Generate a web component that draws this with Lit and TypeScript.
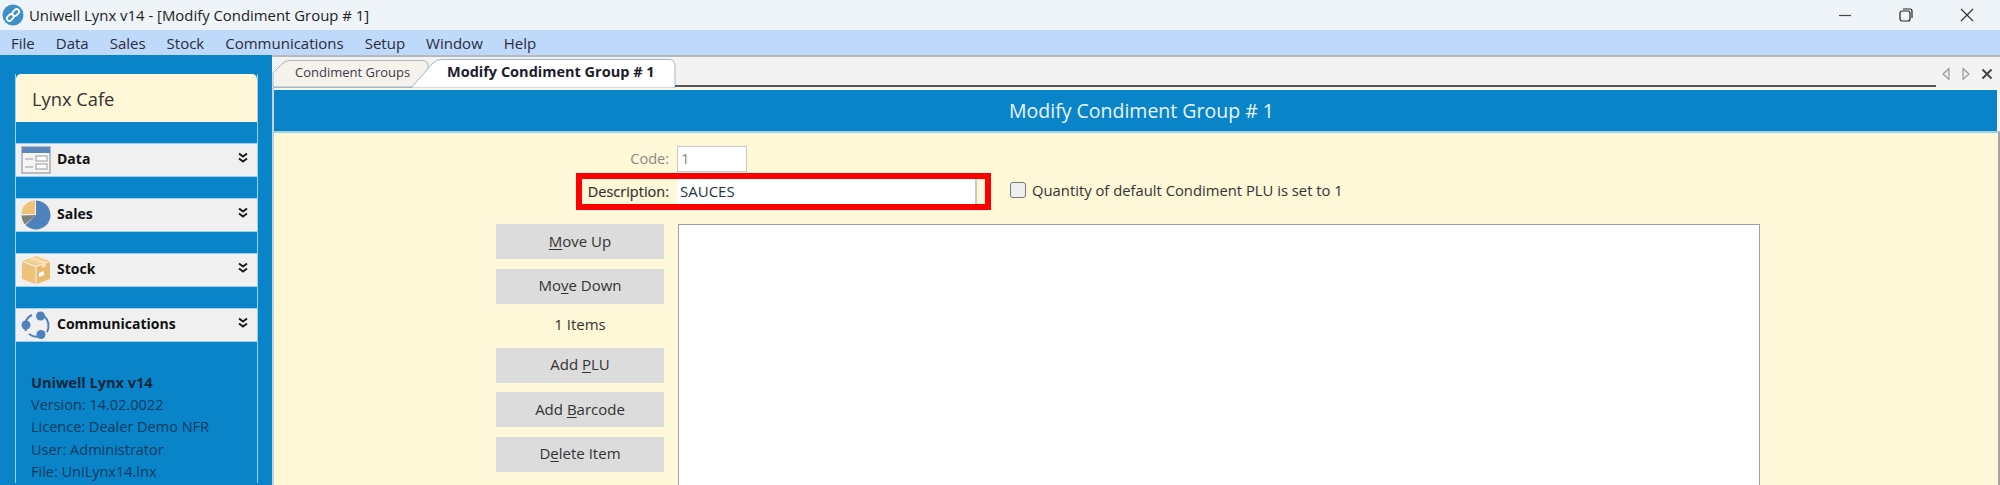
import { LitElement, html, css, svg } from "lit";
import { customElement } from "lit/decorators.js";

const chev = html`<svg class="chev" viewBox="0 0 12 12" width="12" height="12"><path d="M2 1.500 6 4.500 10 1.500M2 6.500 6 9.500 10 6.500" fill="none" stroke="#1a1a1a" stroke-width="2"/></svg>`;

const icons: Record<string, unknown> = {
  data: svg`<rect x="1" y="2" width="28" height="26" fill="#f4f4f4" stroke="#a9a9a9" stroke-width="1.500"/><rect x="1" y="2" width="28" height="6" fill="#5b87bd"/><path d="M4 14h8M4 22h8" stroke="#999" stroke-width="1.200"/><rect x="15" y="11" width="11" height="5" fill="#fff" stroke="#999"/><rect x="15" y="19" width="11" height="5" fill="#fff" stroke="#999"/>`,
  sales: svg`<path d="M15 15 15 0.500A14.500 14.500 0 1 1 4.500 25Z" fill="#4f81bd"/><path d="M15 15 4 24.500A14.500 14.500 0 0 1 0.600 15.500Z" fill="#7f7f7f"/><path d="M14 14 14 .5A13.500 13.500 0 0 0 .5 14Z" fill="#eec377"/>`,
  stock: svg`<path d="M15 1 29 6 15 11 1 6Z" fill="#f3cf92"/><path d="M1 7 14.500 12V29L1 24Z" fill="#eec27b"/><path d="M15.500 12 29 7V24L15.500 29Z" fill="#e9b96f"/><path d="M7 3.500 21 8.500V13L25 11.500V7L11 2Z" fill="#f8e0b4"/><path d="M18 18 23 16V20L18 22Z" fill="#fff"/>`,
  comm: svg`<path d="M5 21A12 12 0 0 1 11 5M23 6A13 13 0 0 1 26 22M20 26A13 13 0 0 1 8 24" fill="none" stroke="#4f81bd" stroke-width="2"/><circle cx="19.500" cy="6" r="4.500" fill="#4f81bd"/><circle cx="5" cy="15" r="4.500" fill="#4f81bd"/><circle cx="20" cy="24.500" r="4.500" fill="#4f81bd"/>`,
};

@customElement("app-root")
export class AppRoot extends LitElement {
  static styles = css`
    :host { display: block; width: 2000px; height: 485px; overflow: hidden; font-family: "Open Sans", "Noto Sans", sans-serif; color: #222; background: #0a84c8; }
    .title { height: 30px; background: #eff4f9; display: flex; align-items: center; font-size: 14.900px; color: #222; padding-right: 3px; }
    .logo { margin: 0 5px 0 2px; flex: none; }
    .title .t { flex: 1; }
    .win { width: 61px; height: 30px; display: flex; align-items: center; justify-content: center; flex: none; }
    .menu { height: 25px; background: #bfd9fb; display: flex; align-items: center; font-size: 15px; color: #2b2b3a; padding-left: 11px; gap: 21px; }
    .body { display: flex; height: 430px; }
    .side { width: 272px; flex: none; padding: 19px 15px 0; box-sizing: border-box; }
    .panel { width: 243px; border-left: 1.500px solid #9fd0ea; border-right: 1.500px solid #9fd0ea; box-sizing: border-box; }
    .cafe { height: 48px; background: #fef7d8; border-radius: 5px 5px 0 0; display: flex; align-items: center; padding-left: 16px; font-size: 18.300px; color: #333; box-sizing: border-box; padding-top: 1px; }
    .sec { height: 34px; background: #f0f0f0; margin-top: 21px; display: flex; align-items: center; font-weight: 700; font-size: 14px; color: #111; padding: 0 8px 3px 5px; border-top: 1px solid #9fd0ea; border-bottom: 1px solid #9fd0ea; box-sizing: border-box; }
    .sec svg.ic { margin-right: 6px; flex: none; margin-bottom: -2px; }
    .sec span { flex: 1; }
    .chev { margin-bottom: 2px; }
    .info { margin-top: 30px; padding-left: 15px; font-size: 14.500px; line-height: 22.200px; color: #0a3a5c; white-space: nowrap; }
    .info b { color: #04263f; }
    .main { flex: 1; display: flex; flex-direction: column; padding-left: 2px; background: #f7f7f7; position: relative; }
    .main::before { content: ""; position: absolute; left: 0; top: 33px; bottom: 0; width: 2px; background: #c4d2dc; }
    .tabs { height: 33px; background: #f3f3f3; border-top: 2px solid #b9b9b9; box-sizing: border-box; margin-left: -2px; position: relative; flex: none; }
    .tabshape { position: absolute; left: 0; bottom: 0; display: block; }
    .tab { position: absolute; white-space: nowrap; line-height: 20px; }
    .t1 { left: 23px; top: 5px; font-size: 13px; color: #3a3a4a; }
    .t2 { left: 175px; top: 5px; font-size: 14.500px; font-weight: 700; color: #1c1c2c; }
    .tabline { position: absolute; left: 403px; right: 64px; bottom: 1px; height: 2px; background: #555; }
    .tools { position: absolute; right: 7px; top: 10px; display: flex; gap: 10px; align-items: center; }
    .bluehead { height: 41px; background: #0a84c8; color: #eaf4fb; font-size: 19.500px; display: flex; align-items: center; justify-content: center; flex: none; margin-top: 2px; margin-right: 3px; padding-left: 12px; box-sizing: border-box; }
    .form { flex: 1; background: #fef7d8; border-top: 2px solid #9fd0ea; border-right: 2px solid #a6a6a6; display: flex; flex-direction: column; min-height: 0; }
    .row { display: flex; align-items: center; }
    .lab { width: 250px; margin-left: 153px; text-align: right; font-size: 14.500px; padding-right: 8px; box-sizing: border-box; flex: none; }
    .code { margin-top: 13px; height: 26px; }
    .code .lab { color: #8a8a8a; padding-bottom: 2px; }
    .codebox { width: 70px; height: 26px; border: 1.500px solid #c8c8c8; background: #fff; box-sizing: border-box; color: #888; font-size: 15px; padding-left: 3px; line-height: 22px; }
    .desc { margin-top: 7px; height: 25px; position: relative; }
    .desc .lab { color: #333; -webkit-text-stroke: 0.200px #333; }
    .input { width: 300px; height: 25px; background: #fff; border-right: 2px solid #c8c8c8; box-sizing: border-box; font-size: 15px; color: #234; padding-left: 3px; line-height: 24px; }
    .redbox { position: absolute; left: 302px; top: -6px; width: 415px; height: 37px; border: 6px solid #ff0000; box-sizing: border-box; pointer-events: none; }
    .cb { margin-left: 33px; margin-bottom: 4px; display: flex; align-items: center; font-size: 14.800px; color: #333; white-space: nowrap; }
    .box { width: 16px; height: 16px; border: 1.500px solid #777; border-radius: 3px; background: #eee; box-sizing: border-box; margin-right: 6px; }
    .lower { display: flex; margin-top: 20px; flex: 1; min-height: 0; }
    .btns { width: 168px; margin-left: 222px; display: flex; flex-direction: column; flex: none; }
    .btn { height: 35px; background: #dcdcdc; display: flex; align-items: center; justify-content: center; font-size: 15px; color: #333; flex: none; padding-bottom: 2px; box-sizing: border-box; }
    .btn + .btn { margin-top: 9.500px; }
    .items { height: 44px; display: flex; align-items: center; justify-content: center; font-size: 15px; color: #333; flex: none; padding-bottom: 3px; box-sizing: border-box; }
    .list { width: 1082px; margin-left: 14px; background: #fff; border: 1.500px solid #a0a0a0; border-bottom: none; box-sizing: border-box; }
    u { text-underline-offset: 2px; }
  `;

  render() {
    const sec = (n: string, k: string) => html`<div class="sec"><svg class="ic" viewBox="0 0 30 30" width="30" height="30">${icons[k]}</svg><span>${n}</span>${chev}</div>`;
    return html`
      <div class="title">
        <svg class="logo" viewBox="0 0 22 22" width="22" height="22"><circle cx="11" cy="11" r="10.500" fill="#3f8fc9"/><g fill="none" stroke="#fff" stroke-width="1.800"><rect x="4.500" y="11" width="7.500" height="5" rx="2.500" transform="rotate(-45 8.250 13.500)"/><rect x="10" y="6" width="7.500" height="5" rx="2.500" transform="rotate(-45 13.750 8.500)"/></g></svg>
        <div class="t">Uniwell Lynx v14 - [Modify Condiment Group # 1]</div>
        <div class="win"><svg width="14" height="14" viewBox="0 0 14 14"><path d="M1 7.500H13" stroke="#444" stroke-width="1.200"/></svg></div>
        <div class="win"><svg width="14" height="14" viewBox="0 0 14 14"><rect x="1" y="3" width="10" height="10" rx="2" fill="none" stroke="#222" stroke-width="1.200"/><path d="M4 1h7a2 2 0 0 1 2 2v7" fill="none" stroke="#222" stroke-width="1.200"/></svg></div>
        <div class="win"><svg width="14" height="14" viewBox="0 0 14 14"><path d="M1 1 13 13M13 1 1 13" stroke="#333" stroke-width="1.200"/></svg></div>
      </div>
      <div class="menu">${["File","Data","Sales","Stock","Communications","Setup","Window","Help"].map(m => html`<span>${m}</span>`)}</div>
      <div class="body">
        <div class="side"><div class="panel">
          <div class="cafe">Lynx Cafe</div>
          ${sec("Data","data")}${sec("Sales","sales")}${sec("Stock","stock")}${sec("Communications","comm")}
          <div class="info"><b>Uniwell Lynx v14</b><br>Version: 14.02.0022<br>Licence: Dealer Demo NFR<br>User: Administrator<br>File: UniLynx14.lnx</div>
        </div></div>
        <div class="main">
          <div class="tabs">
            <svg class="tabshape" width="410" height="31" viewBox="0 0 410 31">
              <path d="M1 16 L11 6 Q14 3.500 18 3.500 H150 Q156 3.500 156 8 V30 H1Z" fill="#f5f3ec" stroke="#b5b5b5"/>
              <path d="M139 31 L161 6 Q164 2.500 170 2.500 H397 Q403 2.500 403 8 V31Z" fill="#fff" stroke="#9db8cf"/>
              <path d="M1 30.500H139" stroke="#9db8cf"/>
            </svg>
            <div class="tab t1">Condiment Groups</div>
            <div class="tab t2">Modify Condiment Group # 1</div>
            <div class="tabline"></div>
            <div class="tools">
              <svg width="10" height="14" viewBox="0 0 10 14"><path d="M8 1.500 2 7l6 5.500Z" fill="#eee" stroke="#999" stroke-width="1.200"/></svg>
              <svg width="10" height="14" viewBox="0 0 10 14"><path d="M2 1.500 8 7l-6 5.500Z" fill="#eee" stroke="#999" stroke-width="1.200"/></svg>
              <svg width="12" height="12" viewBox="0 0 12 12"><path d="M1.500 1.500 10.500 10.500M10.500 1.500 1.500 10.500" stroke="#444" stroke-width="2"/></svg>
            </div>
          </div>
          <div class="bluehead">Modify Condiment Group # 1</div>
          <div class="form">
            <div class="row code"><div class="lab">Code:</div><div class="codebox">1</div></div>
            <div class="row desc"><div class="lab">Description:</div><div class="input">SAUCES</div>
              <div class="redbox"></div>
              <div class="cb"><div class="box"></div>Quantity of default Condiment PLU is set to 1</div>
            </div>
            <div class="lower">
              <div class="btns">
                <div class="btn"><span><u>M</u>ove Up</span></div>
                <div class="btn"><span>Mo<u>v</u>e Down</span></div>
                <div class="items">1 Items</div>
                <div class="btn"><span>Add <u>P</u>LU</span></div>
                <div class="btn"><span>Add <u>B</u>arcode</span></div>
                <div class="btn"><span>D<u>e</u>lete Item</span></div>
              </div>
              <div class="list"></div>
            </div>
          </div>
        </div>
      </div>
    `;
  }
}
